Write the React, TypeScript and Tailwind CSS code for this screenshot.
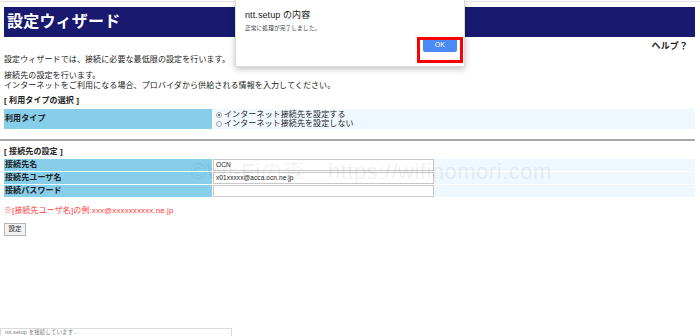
const jp = "font-['Liberation_Sans','Noto_Sans_CJK_JP',sans-serif]";

function Radio({ checked }: { checked?: boolean }) {
  return (
    <span className="mr-[2px] inline-flex h-[6px] w-[6px] items-center justify-center rounded-full border border-[#a8a8a8] bg-[#f4f4f4]">
      {checked && <span className="h-[2px] w-[2px] rounded-full bg-[#555]" />}
    </span>
  );
}

function FieldRow({ label, value }: { label: string; value?: string }) {
  return (
    <div className="grid h-[12px] grid-cols-[208px_1fr] gap-x-[1px]">
      <div className="flex items-center bg-[#87ceeb] pl-[1px] text-[8px] font-bold leading-none">{label}</div>
      <div className="flex items-center bg-[#f0f8ff]">
        <div className="flex h-[12px] w-[221px] items-center border border-[#c8c8c8] bg-white px-[2px] text-[6.5px] leading-none text-[#222]">
          {value}
        </div>
      </div>
    </div>
  );
}

export default function App() {
  return (
    <div className={`relative h-[336px] w-[700px] overflow-hidden bg-white text-[8px] tracking-[0.1px] text-[#222] ${jp}`}>
      <div className="h-[2px] border-b border-[#e4e4e4]" />

      <div className="ml-[4px] mr-[5px] mt-[5px] flex h-[30px] items-center bg-[#191970] pl-[3px]">
        <h1 className="text-[16px] font-bold leading-none tracking-[0.2px] text-white">設定ウィザード</h1>
      </div>

      <div className="mr-[12px] mt-[4px] text-right text-[9px] font-bold leading-[10px]">ヘルプ？</div>

      <p className="ml-[4px] mt-[4px] leading-[10px]">設定ウィザードでは、接続に必要な最低限の設定を行います。</p>
      <p className="ml-[4px] mt-[6px] leading-[10px]">
        接続先の設定を行います。
        <br />
        インターネットをご利用になる場合、プロバイダから供給される情報を入力してください。
      </p>

      <div className="ml-[4px] mt-[5px] font-bold leading-[10px]">[ 利用タイプの選択 ]</div>
      <div className="ml-[4px] mr-[5px] mt-[3px] grid h-[20px] grid-cols-[208px_1fr] gap-x-[1px]">
        <div className="flex items-center bg-[#87ceeb] pl-[1px] font-bold leading-none">利用タイプ</div>
        <div className="flex flex-col justify-center bg-[#f0f8ff] pl-[3px] leading-[9px]">
          <label className="flex items-center">
            <Radio checked />
            インターネット接続先を設定する
          </label>
          <label className="flex items-center">
            <Radio />
            インターネット接続先を設定しない
          </label>
        </div>
      </div>

      <div className="mr-[5px] mt-[10px] h-[2px] bg-[#a6a6a6]" />

      <div className="ml-[4px] mt-[6px] font-bold leading-[10px]">[ 接続先の設定 ]</div>
      <div className="ml-[4px] mr-[5px] mt-[2px] flex flex-col gap-y-[1px]">
        <FieldRow label="接続先名" value="OCN" />
        <FieldRow label="接続先ユーザ名" value="x01xxxxx@acca.ocn.ne.jp" />
        <FieldRow label="接続パスワード" />
      </div>

      <p className="ml-[4px] mt-[9px] leading-[10px] text-[#ff3b3b]">※[接続先ユーザ名]の例:xxx@xxxxxxxxxx.ne.jp</p>

      <button className="ml-[4px] mt-[7px] flex h-[13px] w-[22px] items-center justify-center border border-[#b4b4b4] bg-[#f2f2f2] text-[6.5px] leading-none">
        設定
      </button>

      {/* faint watermark */}
      <div className="pointer-events-none absolute left-[190px] top-[161px] whitespace-nowrap text-[22px] font-light leading-none tracking-[0.5px] text-[#000] opacity-[0.05]">
        ©Wi-Fiの森　https://wifinomori.com
      </div>

      {/* alert dialog */}
      <div className="absolute left-[235px] top-0 flex h-[67px] w-[230px] flex-col rounded-b-[2px] border border-t-0 border-[#dadada] bg-white shadow-[0_2px_6px_rgba(0,0,0,0.25)]">
        <div className="ml-[9px] mt-[10px] text-[9px] leading-[10px] text-[#222]">ntt.setup の内容</div>
        <div className="ml-[9px] mt-[4px] text-[5.7px] leading-[8px] text-[#444]">正常に処理が完了しました。</div>
        <div className="mr-[7px] mt-[5px] flex justify-end">
          <button className="flex h-[15px] w-[34px] items-center justify-center rounded-[2px] bg-[#4a8af4] text-[7px] leading-none text-white">
            OK
          </button>
        </div>
      </div>
      <div className="pointer-events-none absolute left-[417px] top-[37px] h-[26px] w-[46px] border-[3px] border-[#ff0000]" />

      {/* status bubble */}
      <div className="absolute bottom-0 left-0 flex h-[8px] w-[232px] items-center border border-b-0 border-[#dcdcdc] bg-white pl-[4px] text-[5.5px] leading-none text-[#777]">
        ntt.setup を接続しています...
      </div>
    </div>
  );
}
